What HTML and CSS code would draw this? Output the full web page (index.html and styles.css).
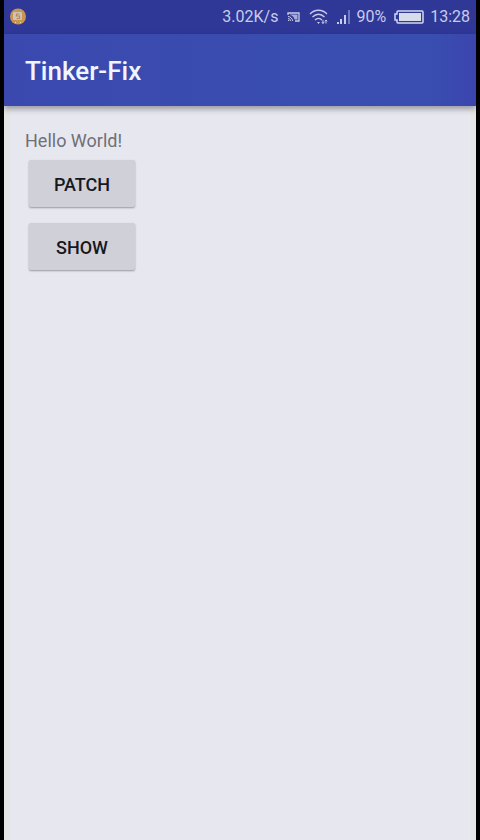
FILE: index.html
```html
<!DOCTYPE html>
<html lang="en">
<head>
<meta charset="utf-8">
<meta name="viewport" content="width=device-width, initial-scale=1">
<title>Tinker-Fix</title>
<link rel="stylesheet" href="styles.css">
</head>
<body>
<div class="screen">
  <div class="status">
    <svg class="notice" width="18" height="18" viewBox="0 0 18 18" aria-hidden="true">
      <circle cx="9" cy="8.500" r="8" fill="#c9964f"/>
      <rect x="4" y="4" width="9" height="8" rx="1" fill="#ccc3bd"/>
      <path d="M10.500 6H7.500v2h3v2.500h-3" fill="none" stroke="#b98950" stroke-width="1.200"/>
      <path d="M6 14.500h1M11 14.500h1" stroke="#eed9a8"/>
    </svg>
    <span class="speed">3.02K/s</span>
    <svg class="cast" width="13" height="10" viewBox="0 0 13 10" fill="none" stroke="#c9cbea" aria-hidden="true">
      <path d="M1 3V1h11v8H8" stroke-width="1.300"/>
      <path d="M1 4.500a4.500 4.500 0 0 1 4.500 4.500M1 6.500a2.500 2.500 0 0 1 2.500 2.500"/>
      <path d="M3 2.500h7.500v5H7.500C7 5 5.500 3.500 3 3z" fill="#a9acd8" stroke="none"/>
      <path d="M1 8h1v1H1z" fill="#c9cbea" stroke="none"/>
    </svg>
    <svg class="wifi" width="20" height="16" viewBox="0 0 20 16" fill="none" stroke="#c9cbea" stroke-width="1.300" aria-hidden="true">
      <path d="M1 5C5.500 0 13.500 0 18 5M3.500 8C7 4.300 12 4.300 15.500 8M6 11c2-2.300 5-2.300 7 0"/>
      <path d="M8 13h3l-1.500 2z" fill="#c9cbea" stroke="none"/>
      <path d="M14 14.500V11M12.800 13l1.200 1.500 1.200-1.500M17 14.500V11M15.800 12.300L17 11l1.200 1.300" stroke-width="1"/>
    </svg>
    <svg class="signal" width="13" height="16" viewBox="0 0 13 16" aria-hidden="true">
      <path d="M0 13h2v2H0zM3 10h2v5H3zM7 6h2v9H7z" fill="#c9cbea"/>
      <path d="M11 1h2v14h-2z" fill="#7278bd"/>
    </svg>
    <span class="percent">90%</span>
    <svg class="battery" width="30" height="14" viewBox="0 0 30 14" aria-hidden="true">
      <path d="M4 1h24q1 0 1 1v10q0 1-1 1H4q-1 0-1-1v-2H1V4h2V2q0-1 1-1z" fill="none" stroke="#d5d7ee" stroke-width="1.500"/>
      <path d="M5 3h22v8H5z" fill="#d8dbe9"/>
    </svg>
    <time>13:28</time>
  </div>
  <header class="toolbar"><h1>Tinker-Fix</h1></header>
  <main class="content">
    <p>Hello World!</p>
    <button type="button">PATCH</button>
    <button type="button">SHOW</button>
  </main>
</div>
</body>
</html>
```
FILE: styles.css
```css
* { box-sizing: border-box; }

body {
  margin: 0;
  padding: 0 4px;
  background: #000;
  font-family: Roboto, "Liberation Sans", sans-serif;
}

.screen {
  display: flex;
  flex-direction: column;
  min-height: 100vh;
  background: #e7e7f0;
}

.status {
  display: flex;
  align-items: center;
  height: 34px;
  padding: 0 6px 0 5px;
  background: #2f3897;
  color: #c9cbea;
  font-size: 16px;
  line-height: 20px;
}

.notice { margin-right: auto; }
.cast { margin-left: 9px; }
.wifi { margin-left: 9px; }
.signal { margin-left: 8px; }
.percent { margin-left: 6px; }
.battery { margin: 0 6px 0 8px; }

.toolbar {
  position: relative;
  display: flex;
  align-items: center;
  height: 72px;
  padding: 2px 21px 0;
  background: linear-gradient(90deg, #3b49af, #394eb0 90%, #3b45ae);
  box-shadow: 0 3px 6px rgba(0, 0, 0, 0.35);
  color: #f0f5ff;
}

h1 {
  margin: 0;
  font-size: 26px;
  line-height: 32px;
  font-weight: 500;
}

.content {
  display: flex;
  flex: 1;
  flex-direction: column;
  align-items: flex-start;
  padding: 24px 15px;
  border: solid #e6e6e6;
  border-width: 0 5px 0 6px;
}

p {
  margin: 0;
  color: #6f7076;
  font-size: 18px;
  line-height: 22px;
}

button {
  width: 106px;
  height: 47px;
  margin: 8px 4px;
  padding: 2px 0 0;
  border: 0;
  border-radius: 2px;
  background: #d0d0d9;
  box-shadow: 0 1px 2px rgba(0, 0, 0, 0.35);
  color: #17181d;
  font: 500 18px/22px Roboto, "Liberation Sans", sans-serif;
}
```
